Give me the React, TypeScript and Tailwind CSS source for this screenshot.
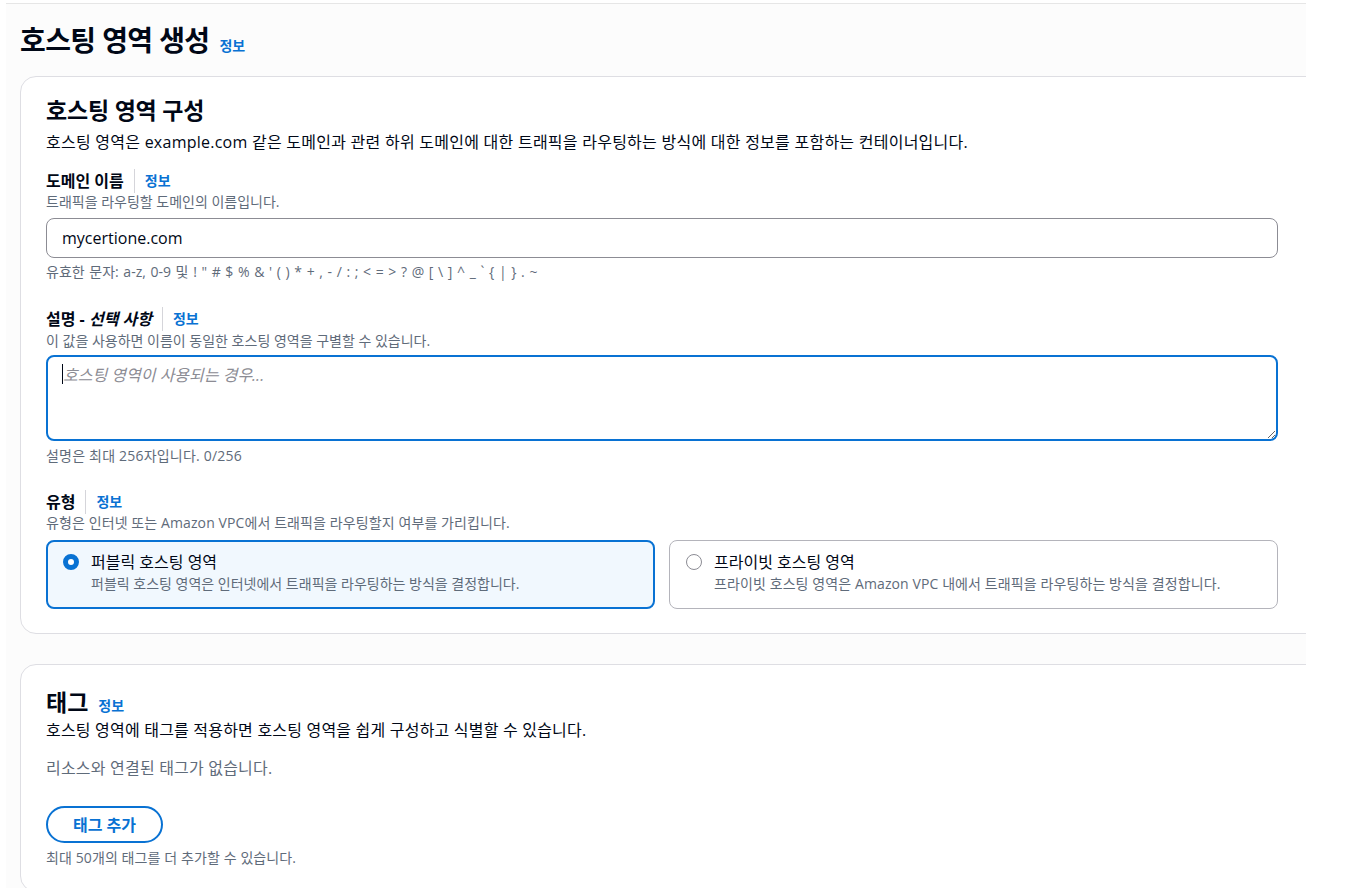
import React from "react";

const font = { fontFamily: '"Open Sans", "Noto Sans CJK KR", sans-serif' } as React.CSSProperties;

function Info({ className = "" }: { className?: string }) {
  return <span className={"text-[14px] font-bold text-[#0972d3] " + className}>정보</span>;
}

function Label({ children }: { children: React.ReactNode }) {
  return (
    <div className="flex items-center h-[22px] leading-[22px]">
      <span className="text-[16px] font-bold text-[#000716]">{children}</span>
      <span className="ml-[10px] mr-[10px] h-[24px] border-l border-[#d5d5da]"></span>
      <Info />
    </div>
  );
}

export default function App() {
  return (
    <div className="min-h-screen bg-white overflow-hidden" style={font}>
      <div className="ml-[6px] mt-[3px] w-[1300px] h-[885px] border-t border-[#e6e6e6] bg-[#fcfcfc] overflow-hidden px-[14px]">
        <div className="mt-[18px] flex items-baseline h-[36px] leading-[36px]">
          <h1 className="text-[28px] font-bold text-[#000716] tracking-[-0.6px]">호스팅 영역 생성</h1>
          <Info className="ml-[10px]" />
        </div>

        <div className="mt-[18px] w-[1340px] rounded-[16px] border border-[#dedee3] bg-white pl-[25px] pt-[19px] pb-[24px]">
          <div className="w-[1232px]">
            <h2 className="text-[23px] leading-[28px] font-bold text-[#000716] tracking-[-0.2px]">호스팅 영역 구성</h2>
            <p className="mt-[7px] text-[16px] leading-[22px] text-[#000716] tracking-[0.25px]">
              호스팅 영역은 example.com 같은 도메인과 관련 하위 도메인에 대한 트래픽을 라우팅하는 방식에 대한 정보를 포함하는 컨테이너입니다.
            </p>

            <div className="mt-[17px]">
              <Label>도메인 이름</Label>
            </div>
            <p className="mt-[1px] text-[14px] leading-[18px] text-[#5f6b7a]">트래픽을 라우팅할 도메인의 이름입니다.</p>
            <div className="mt-[7px] h-[40px] rounded-[8px] border border-[#8c8c94] bg-white px-[15px] flex items-center text-[16px] text-[#000716]">
              mycertione.com
            </div>
            <p className="mt-[5px] text-[14px] leading-[18px] text-[#5f6b7a] [word-spacing:1px]">
              유효한 문자: a-z, 0-9 및 ! " # $ % &amp; ' ( ) * + , - / : ; &lt; = &gt; ? @ [ \ ] ^ _ ` {"{"} | {"}"} . ~
            </p>

            <div className="mt-[27px]">
              <Label>
                설명 - <i>선택 사항</i>
              </Label>
            </div>
            <p className="mt-[2px] text-[14px] leading-[18px] text-[#5f6b7a]">이 값을 사용하면 이름이 동일한 호스팅 영역을 구별할 수 있습니다.</p>
            <div className="relative mt-[5px]">
              <textarea
                className="block w-full h-[86px] rounded-[8px] border-2 border-[#0972d3] bg-white px-[15px] pt-[6px] text-[16px] leading-[24px] text-[#000716] placeholder:italic placeholder:text-[#8c8c94] outline-none resize-y"
                placeholder="호스팅 영역이 사용되는 경우..."
                style={font}
              />
              <span className="absolute left-[16px] top-[9px] h-[20px] w-px bg-[#000716]"></span>
            </div>
            <p className="mt-[6px] text-[14px] leading-[18px] text-[#5f6b7a] tracking-[0.2px]">설명은 최대 256자입니다. 0/256</p>

            <div className="mt-[26px]">
              <Label>유형</Label>
            </div>
            <p className="mt-[1px] text-[14px] leading-[18px] text-[#5f6b7a] tracking-[0.1px]">유형은 인터넷 또는 Amazon VPC에서 트래픽을 라우팅할지 여부를 가리킵니다.</p>
            <div className="mt-[8px] grid grid-cols-2 gap-[14px]">
              <div className="h-[69px] rounded-[8px] border-2 border-[#0972d3] bg-[#f1f8fe] pl-[15px] pt-[9px] flex gap-[12px]">
                <span className="mt-[3px] h-[16px] w-[16px] rounded-full border-[5px] border-[#0972d3] bg-white shrink-0"></span>
                <div>
                  <div className="text-[16px] leading-[22px] text-[#000716]">퍼블릭 호스팅 영역</div>
                  <div className="mt-[2px] text-[14px] leading-[18px] text-[#5f6b7a]">퍼블릭 호스팅 영역은 인터넷에서 트래픽을 라우팅하는 방식을 결정합니다.</div>
                </div>
              </div>
              <div className="h-[69px] rounded-[8px] border border-[#b4b4bb] bg-white pl-[16px] pt-[10px] flex gap-[12px]">
                <span className="mt-[3px] h-[16px] w-[16px] rounded-full border-[1.5px] border-[#8c8c94] bg-white shrink-0"></span>
                <div>
                  <div className="text-[16px] leading-[22px] text-[#000716]">프라이빗 호스팅 영역</div>
                  <div className="mt-[2px] text-[14px] leading-[18px] text-[#5f6b7a] tracking-[0.1px]">프라이빗 호스팅 영역은 Amazon VPC 내에서 트래픽을 라우팅하는 방식을 결정합니다.</div>
                </div>
              </div>
            </div>
          </div>
        </div>

        <div className="mt-[30px] w-[1340px] rounded-[16px] border border-[#dedee3] bg-white pl-[25px] pt-[23px] pb-[24px]">
          <div className="w-[1232px]">
            <div className="flex items-baseline h-[28px] leading-[28px]">
              <h2 className="text-[23px] font-bold text-[#000716]">태그</h2>
              <Info className="ml-[10px]" />
            </div>
            <p className="mt-[3px] text-[16px] leading-[22px] text-[#000716] tracking-[0.2px]">호스팅 영역에 태그를 적용하면 호스팅 영역을 쉽게 구성하고 식별할 수 있습니다.</p>
            <p className="mt-[16px] text-[16px] leading-[22px] text-[#5f6b7a] tracking-[0.2px]">리소스와 연결된 태그가 없습니다.</p>
            <button
              className="mt-[27px] h-[37px] w-[117px] rounded-full border-2 border-[#0972d3] bg-white text-[16px] font-bold text-[#0972d3] flex items-center justify-center"
              style={font}
            >
              태그 추가
            </button>
            <p className="mt-[6px] text-[14px] leading-[18px] text-[#5f6b7a] tracking-[0.1px]">최대 50개의 태그를 더 추가할 수 있습니다.</p>
          </div>
        </div>
      </div>
    </div>
  );
}
